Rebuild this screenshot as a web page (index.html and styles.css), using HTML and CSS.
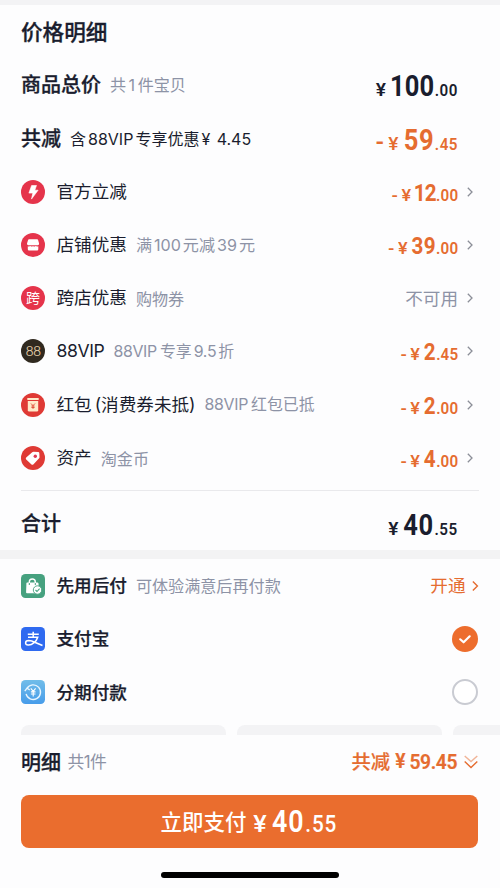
FILE: index.html
```html
<!DOCTYPE html>
<html lang="zh-CN">
<head>
<meta charset="utf-8">
<title>价格明细</title>
<link rel="stylesheet" href="styles.css">
</head>
<body>
<main class="page">
  <section class="detail">
    <h1 class="row title">价格明细</h1>
    <div class="row">
      <span class="head">商品总价</span><span class="note">共<i class="one">1</i>件宝贝</span>
      <span class="price dark big"><b class="yen">¥</b><b class="int hundred">100</b><b class="dec">.00</b></span>
    </div>
    <div class="row">
      <span class="head">共减</span><span class="note ink">含<i>88VIP</i>专享优惠<i class="y">¥</i><i class="amt">4.45</i></span>
      <span class="price big"><b class="minus">-</b><b class="yen">¥</b><b class="int">59</b><b class="dec">.45</b></span>
    </div>
    <div class="row">
      <svg class="icon" viewBox="0 0 24 24"><circle cx="12" cy="12" r="12" fill="#e5344b"/><path d="M10.600 5.500h4.900l-1.700 4.700h3.300l-6.600 8.900 1.300-6H7.900z" fill="#fff" stroke="#fff" stroke-width=".6" stroke-linejoin="round"/></svg>
      <span class="label">官方立减</span>
      <span class="price"><b class="minus">-</b><b class="yen">¥</b><b class="int twelve">12</b><b class="dec">.00</b></span>
      <svg class="chev" viewBox="0 0 6 10"><path d="M.8.8 5 5 .8 9.2"/></svg>
    </div>
    <div class="row">
      <svg class="icon" viewBox="0 0 24 24"><circle cx="12" cy="12" r="12" fill="#e5344b"/><path d="M8 6.300h8.200q.7 0 .9.700l1 3.500q.1 1.600-1.300 1.700H7.300q-1.400-.1-1.300-1.700L7.100 7q.2-.7.900-.7zM6.800 13.300q1.400.6 2.600-.2 1.300 1 2.600 0 1.300 1 2.600 0 1.300.8 2.700.2v3q0 1.200-1.200 1.200H8q-1.200 0-1.200-1.200z" fill="#fff"/></svg>
      <span class="label">店铺优惠</span><span class="note">满<i>100</i>元减<i>39</i>元</span>
      <span class="price"><b class="minus">-</b><b class="yen">¥</b><b class="int">39</b><b class="dec">.00</b></span>
      <svg class="chev" viewBox="0 0 6 10"><path d="M.8.8 5 5 .8 9.2"/></svg>
    </div>
    <div class="row">
      <span class="icon badge cross">跨</span>
      <span class="label">跨店优惠</span><span class="note">购物券</span>
      <span class="state">不可用</span>
      <svg class="chev" viewBox="0 0 6 10"><path d="M.8.8 5 5 .8 9.2"/></svg>
    </div>
    <div class="row">
      <span class="icon badge vip">88</span>
      <span class="label vipname">88VIP</span><span class="note tight"><i class="first">88VIP</i>专享<i>9.5</i>折</span>
      <span class="price"><b class="minus">-</b><b class="yen">¥</b><b class="int">2</b><b class="dec">.45</b></span>
      <svg class="chev" viewBox="0 0 6 10"><path d="M.8.8 5 5 .8 9.2"/></svg>
    </div>
    <div class="row">
      <svg class="icon" viewBox="0 0 24 24"><circle cx="12" cy="12" r="12" fill="#df3a35"/><path d="M6.300 5h11.400v2H6.300z" fill="#ffe9c9"/><path d="M6.800 8h10.400v9.200q0 1.300-1.300 1.300H8.100q-1.300 0-1.300-1.300z" fill="#ffe9c9"/><path d="M10 10.500l2 2.100 2-2.100M12 12.600v3.300M10.400 13h3.200M10.400 14.500h3.200" fill="none" stroke="#df4a35" stroke-width=".9"/></svg>
      <span class="label">红包<span class="paren">(消费券未抵)</span></span><span class="note tight"><i class="first">88VIP</i>红包已抵</span>
      <span class="price"><b class="minus">-</b><b class="yen">¥</b><b class="int">2</b><b class="dec">.00</b></span>
      <svg class="chev" viewBox="0 0 6 10"><path d="M.8.8 5 5 .8 9.2"/></svg>
    </div>
    <div class="row">
      <svg class="icon" viewBox="0 0 24 24"><circle cx="12" cy="12" r="12" fill="#df3a35"/><path d="M5.200 11.600l6-5.300q.6-.5 1.300-.5l4.600.1q1.200.1 1.200 1.200l.2 4.100q0 .8-.6 1.400l-5.600 5.800q-.9.900-1.800 0l-5.300-5q-.9-.9 0-1.800z" fill="#fff"/><circle cx="14.300" cy="10.200" r="1.700" fill="#df3a55"/></svg>
      <span class="label">资产</span><span class="note">淘金币</span>
      <span class="price"><b class="minus">-</b><b class="yen">¥</b><b class="int">4</b><b class="dec">.00</b></span>
      <svg class="chev" viewBox="0 0 6 10"><path d="M.8.8 5 5 .8 9.2"/></svg>
    </div>
    <div class="row total">
      <span class="head">合计</span>
      <span class="price dark big"><b class="yen">¥</b><b class="int">40</b><b class="dec">.55</b></span>
    </div>
  </section>

  <section class="methods">
    <div class="row">
      <svg class="icon" viewBox="0 0 24 24"><rect width="24" height="24" rx="4.500" fill="#46a17f"/><path d="M8.300 9.500V8q0-3 3-3t3 3v1.500" fill="none" stroke="#fff" stroke-width="1.400"/><path d="M6.200 8.500h10.200q1 0 1.100 1l.6 8.700q0 1-1 1H6q-1 0-.9-1l.3-8.900q0-.8.8-.8z" fill="#fff"/><path d="M8.300 9v2M14.300 9v2" stroke="#46a17f" stroke-width="1"/><circle cx="16.500" cy="16" r="4.200" fill="#fff" stroke="#46a17f" stroke-width=".9"/><path d="M14.500 16l1.500 1.500 2.600-2.800" fill="none" stroke="#46a17f" stroke-width="1.100"/></svg>
      <span class="label strong">先用后付</span><span class="note">可体验满意后再付款</span>
      <span class="open">开通</span>
      <svg class="chev orange" viewBox="0 0 6 10"><path d="M.8.8 5 5 .8 9.2"/></svg>
    </div>
    <div class="row">
      <svg class="icon" viewBox="0 0 24 24"><rect width="24" height="24" rx="4.500" fill="#2f6af0"/><path d="M6.800 7.300h11M12.200 4.800v5.300M7 10.300h9.700q-.9 3.200-3.600 5.300-3 2.600-6 2.400-2.500-.3-2.500-2.100 0-2.200 3-2.300 3 0 6.700 1.900l7.200 3" fill="none" stroke="#fff" stroke-width="1.500"/></svg>
      <span class="label strong">支付宝</span>
      <svg class="radio" viewBox="0 0 26 26"><circle cx="13" cy="13" r="13" fill="#ed6d2d"/><path d="M8.200 13.300l3.400 3 6.100-6" fill="none" stroke="#fff" stroke-width="2.200" stroke-linecap="round" stroke-linejoin="round"/></svg>
    </div>
    <div class="row">
      <svg class="icon" viewBox="0 0 24 24"><defs><linearGradient id="sky" x2="0" y2="1"><stop stop-color="#71bde9"/><stop offset="1" stop-color="#479cea"/></linearGradient></defs><rect width="24" height="24" rx="4.500" fill="url(#sky)"/><path d="M6 8.300a7.300 7.300 0 1 1-.9 5.500M3.800 11.200l2.200-3 2.800 1.800" fill="none" stroke="#e8f6ff" stroke-width="1.400"/><path d="M9.800 8.300l2.400 3 2.400-3M12.200 11.300v5.200M9.900 11.900h4.600M9.900 14h4.600" fill="none" stroke="#fff" stroke-width="1.100"/></svg>
      <span class="label strong">分期付款</span>
      <svg class="radio" viewBox="0 0 26 26"><circle cx="13" cy="13" r="12" fill="#fff" stroke="#c9cbd2" stroke-width="2"/></svg>
    </div>
    <div class="plans"><span></span><span></span><span></span></div>
  </section>

  <footer class="footer">
    <div class="summary">
      <span class="head">明细</span><span class="count">共1件</span>
      <span class="saved">共减<b class="yen">¥</b><b class="sum">59.45</b></span>
      <svg class="down" viewBox="0 0 14 14"><path d="M.7 1 7 6.500 13.300 1" opacity=".5"/><path d="M.7 6.500 7 12.500l6.300-6"/></svg>
    </div>
    <button class="pay"><span>立即支付</span><span class="payprice"><b class="yen">¥</b><b class="int">40</b><b class="dec">.55</b></span></button>
    <div class="homebar"></div>
  </footer>
</main>
</body>
</html>
```
FILE: styles.css
```css
* { box-sizing: border-box; }

body {
  margin: 0;
  background: #fdfdfe;
  color: #1a1d2e;
  font-family: Inter, "Noto Sans CJK SC", sans-serif;
  font-size: 17.600px;
}

i, b { font-style: normal; }

.page {
  display: flex;
  flex-direction: column;
  width: 500px;
  height: 888px;
  overflow: hidden;
}

.detail {
  border-top: 5px solid #f3f3f5;
  height: 550px;
  padding: 0 21.500px 0 21px;
}

.row {
  display: flex;
  align-items: center;
  height: 53.300px;
  white-space: nowrap;
  line-height: 30px;
}

.title {
  margin: 0;
  font-size: 21.600px;
  font-weight: 500;
  -webkit-text-stroke: .3px;
}

.head {
  padding-top: 1px;
  font-size: 20px;
  font-weight: 500;
  -webkit-text-stroke: .3px;
}

.note {
  margin-left: 9px;
  padding-top: 1px;
  color: #8d93a6;
  font-size: 16.100px;
}

.note i { margin: 0 2px; }
.note i.one { margin: 0 2.500px; }
.note i.first { margin-left: 0; margin-right: 3px; }
.note.ink { color: #1a1d2e; font-size: 16px; }
.note .amt { margin-left: 4.500px; }
.tight i { letter-spacing: -.3px; }
.note.tight { font-size: 15.900px; }

.icon {
  flex: none;
  width: 24px;
  height: 24px;
  margin-right: 11.500px;
}

.badge {
  border-radius: 50%;
  color: #fff;
  text-align: center;
  line-height: 24px;
}

.cross { background: #e5344b; font-size: 14px; }

.vip {
  background: #30291f;
  color: #e5cfab;
  font-size: 13.500px;
  font-weight: 300;
  letter-spacing: -.8px;
}

.vipname { letter-spacing: -.4px; }
.paren { margin-left: 3px; }
.strong { font-weight: 500; -webkit-text-stroke: .25px; }

.price, .payprice {
  display: flex;
  align-items: baseline;
  transform: scaleX(.88);
  transform-origin: right;
  font-family: Roboto, sans-serif;
  line-height: 30px;
}

.price {
  margin-left: auto;
  margin-right: 20.500px;
  padding-top: 5px;
  color: #e56c30;
  font-size: 17.300px;
}

.price b { font-weight: 600; }
.price .int { font-size: 23.500px; font-weight: 700; letter-spacing: .5px; }
.price .int.twelve { letter-spacing: -.8px; margin-left: -1.500px; }
.price .dec { margin-left: 0; letter-spacing: .2px; }
.price .yen, .payprice .yen { transform: scaleX(1.250); transform-origin: right; }
.price .yen { margin-right: 4px; font-size: 16.500px; font-weight: 500; }
.price .minus { margin-right: 7px; transform: scaleX(1.150); }
.price.big { padding-top: 7px; }
.big .int { font-size: 29px; letter-spacing: .8px; }
.big .int.hundred { letter-spacing: .1px; margin-left: -1px; }
.big .dec { margin-left: .5px; letter-spacing: .6px; }
.big .minus { margin-right: 8px; font-size: 23px; }
.price.big .yen { margin-right: 5.500px; font-size: 17.500px; }
.price.dark { color: #1a1d2e; }
.price.dark .yen { font-weight: 600; }

.price:has(+ .chev), .state { margin-right: 9px; }
.state { padding-top: 1px; }

.chev {
  flex: none;
  width: 6px;
  height: 10px;
  margin-right: 5.500px;
  fill: none;
  stroke: #8b8e98;
  stroke-width: 1.300;
  overflow: visible;
}

.state { margin-left: auto; color: #8d93a6; }

.total {
  height: 59px;
  margin-top: 5px;
  border-top: 1px solid #e9e9ec;
  padding-top: 7px;
}

.methods {
  border-top: 9px solid #f3f3f4;
  height: 185px;
  padding-left: 21px;
  padding-right: 22px;
}

.methods .label { padding-top: 1px; }

.open { margin-left: auto; color: #e56c30; }

.chev.orange {
  width: 6.500px;
  height: 12px;
  margin: 0 0 0 6px;
  stroke: #e56c30;
}

.radio { width: 26px; height: 26px; margin-left: auto; }

.plans { display: flex; gap: 11px; width: 480px; margin-top: 6px; }

.plans span {
  flex: none;
  width: 205px;
  height: 10px;
  border-radius: 8px 8px 0 0;
  background: #f3f3f5;
}

.footer { height: 153px; padding: 0 22px 0 21px; }

.summary { display: flex; align-items: center; height: 54px; line-height: 30px; }
.count { margin-left: 6.500px; color: #8d93a6; font-size: 16.800px; letter-spacing: -.6px; }

.saved {
  display: flex;
  align-items: center;
  margin-left: auto;
  color: #e56c30;
  font-size: 19.300px;
  font-weight: 500;
  -webkit-text-stroke: .2px;
}

.saved b { font-family: Roboto, sans-serif; font-weight: 600; }
.saved .yen { margin: 0 4px 0 5px; }
.saved .sum { padding-top: 1px; letter-spacing: -.4px; }

.down {
  width: 14px;
  height: 14px;
  margin-left: 7px;
  fill: none;
  stroke: #e56c30;
  stroke-width: 1.400;
}

.pay {
  display: flex;
  align-items: center;
  width: 100%;
  height: 53px;
  margin: 6px 0 0;
  padding: 0 0 0 139.500px;
  border: 0;
  border-radius: 8px;
  background: #ea6d2e;
  color: #fff;
  font: 500 21.500px/30px Inter, "Noto Sans CJK SC", sans-serif;
}

.payprice { margin-left: 9px; padding-top: 3px; font-size: 23.500px; transform-origin: left; }
.payprice b { font-weight: 500; }
.payprice .int { font-size: 30.500px; font-weight: 600; letter-spacing: 1px; }
.payprice .yen { margin-right: 6px; font-size: 23px; }
.payprice .dec { margin-left: 1px; letter-spacing: 1px; }

.homebar {
  width: 178px;
  height: 6px;
  margin: 24px auto 0;
  border-radius: 3px;
  background: #000;
}
```
